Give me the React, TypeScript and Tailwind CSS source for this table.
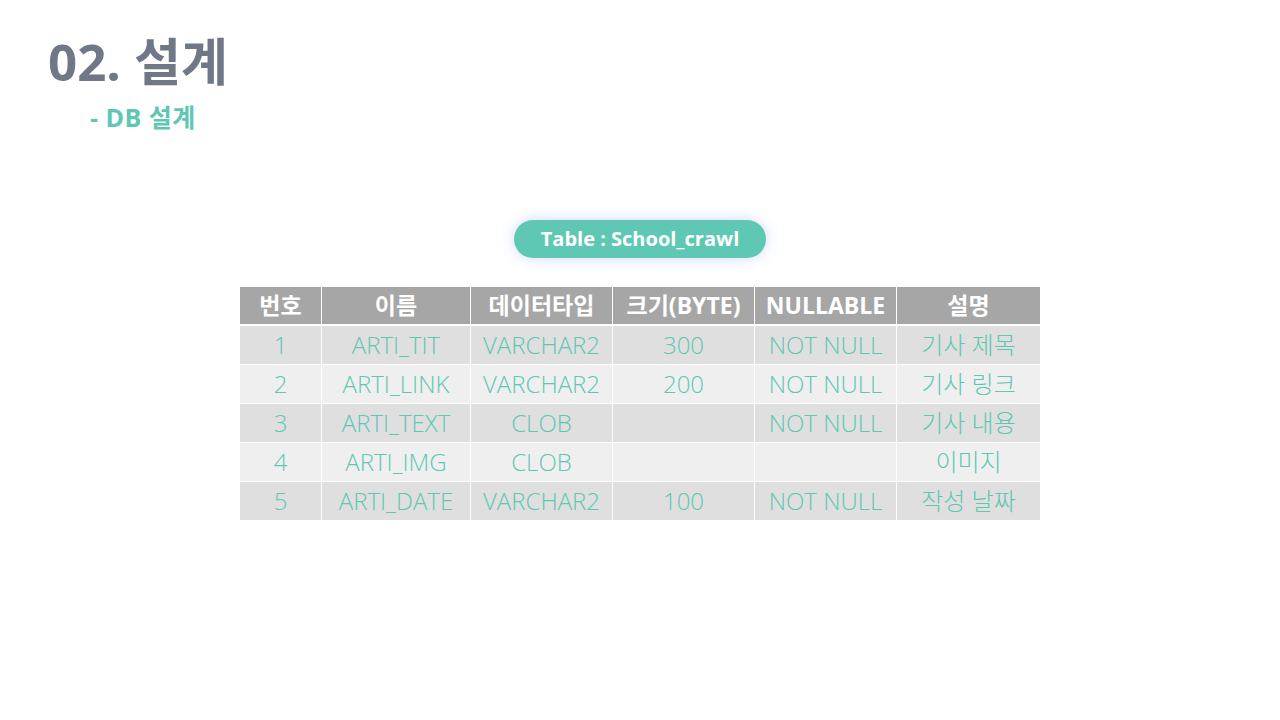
import React from "react";

const headers = ["번호", "이름", "데이터타입", "크기(BYTE)", "NULLABLE", "설명"];
const rows = [
  ["1", "ARTI_TIT", "VARCHAR2", "300", "NOT NULL", "기사 제목"],
  ["2", "ARTI_LINK", "VARCHAR2", "200", "NOT NULL", "기사 링크"],
  ["3", "ARTI_TEXT", "CLOB", "", "NOT NULL", "기사 내용"],
  ["4", "ARTI_IMG", "CLOB", "", "", "이미지"],
  ["5", "ARTI_DATE", "VARCHAR2", "100", "NOT NULL", "작성 날짜"],
];

const font = { fontFamily: '"Open Sans", "Noto Sans CJK KR", sans-serif' };

export default function App() {
  return (
    <div className="w-[1280px] h-[720px] bg-white relative overflow-hidden" style={font}>
      <div className="pl-[48px] pt-[28px]">
        <div className="text-[51px] font-bold text-[#707786] leading-[66px]">02. 설계</div>
        <div className="pl-[42px] text-[25px] font-bold text-[#5ec7b3] leading-[30px] mt-[8px] tracking-[0.5px]">- DB 설계</div>
      </div>
      <div className="flex justify-center mt-[88px]">
        <div className="w-[252px] h-[38px] rounded-full bg-[#5ec8b4] shadow-[0_0_14px_rgba(120,150,230,0.35)] flex items-center justify-center text-white font-bold text-[20px]">
          Table&nbsp;:&nbsp;School_crawl
        </div>
      </div>
      <div className="ml-[240px] mt-[29px] w-[800px] bg-white">
        <div className="grid grid-cols-[81px_148px_141px_141px_141px_143px] gap-x-px h-[37px]">
          {headers.map((h) => (
            <div key={h} className="bg-[#a6a6a6] text-white font-bold text-[23px] flex items-center justify-center leading-none">
              {h}
            </div>
          ))}
        </div>
        <div className="h-[2px]" />
        {rows.map((r, i) => (
          <div
            key={i}
            className="grid grid-cols-[81px_148px_141px_141px_141px_143px] gap-x-px h-[38px] mb-px"
          >
            {r.map((c, j) => (
              <div
                key={j}
                className={`${i % 2 === 0 ? "bg-[#dfdfdf]" : "bg-[#efefef]"} text-[#5ec7b3] text-[24px] flex items-center justify-center leading-none font-light`}
              >
                {c}
              </div>
            ))}
          </div>
        ))}
      </div>
    </div>
  );
}
